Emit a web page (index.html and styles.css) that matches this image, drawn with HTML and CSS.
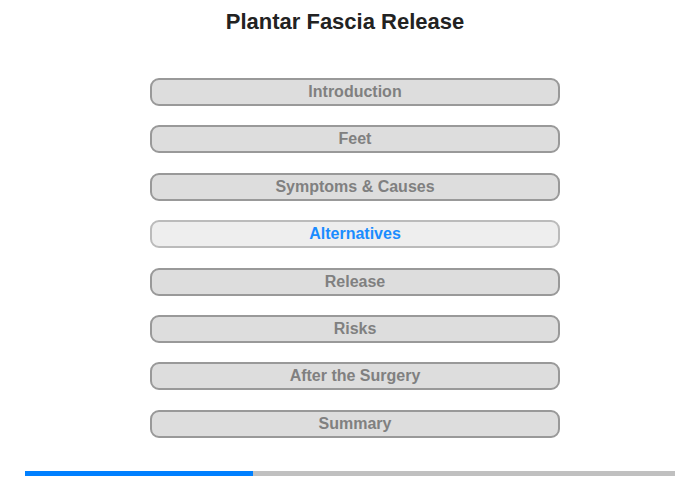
FILE: index.html
```html
<!DOCTYPE html>
<html>
    <head>
        <title>
            Plantar Fascia Release
        </title>
        <link rel="stylesheet" href="styles.css">
    </head>
    <body>

        <p class="title">Plantar Fascia Release</p>

        <div class="menu">
            <button>Introduction</button>
            <button>Feet</button>
            <button>Symptoms &amp; Causes</button>
            <button class="current">Alternatives</button>
            <button>Release</button>
            <button>Risks</button>
            <button>After the Surgery</button>
            <button>Summary</button>
        </div>

        <div class="progress">
            <div class="progress-done" style="width: 228px;"></div>
        </div>

    </body>
</html>
```

FILE: styles.css
```css
body {
    margin: 0;
    width: 700px;
    height: 480px;
    font-family: "Liberation Sans", Arial, sans-serif;
    background-color: white;
}
.title {
    margin: 0;
    padding-top: 9px;
    height: 27px;
    font-size: 22px;
    font-weight: bold;
    color: #222222;
    text-align: center;
    padding-right: 10px;
}
.menu {
    display: flex;
    flex-direction: column;
    gap: 19.4px;
    width: 410px;
    margin-top: 42px;
    margin-left: 150px;
}
.menu button {
    box-sizing: border-box;
    height: 28px;
    border: 2px solid #999999;
    border-radius: 9px;
    background-color: #dddddd;
    color: #808080;
    font-family: "Liberation Sans", Arial, sans-serif;
    font-size: 16px;
    font-weight: bold;
    padding: 0;
}
.menu button:hover {
    cursor: pointer;
}
.menu .current {
    background-color: #eeeeee;
    border-color: #bbbbbb;
    color: #1a8cff;
}
.progress {
    position: absolute;
    left: 25px;
    top: 471px;
    width: 650px;
    height: 5px;
    background-color: #c0c0c0;
}
.progress-done {
    height: 5px;
    background-color: #0080ff;
}
```
